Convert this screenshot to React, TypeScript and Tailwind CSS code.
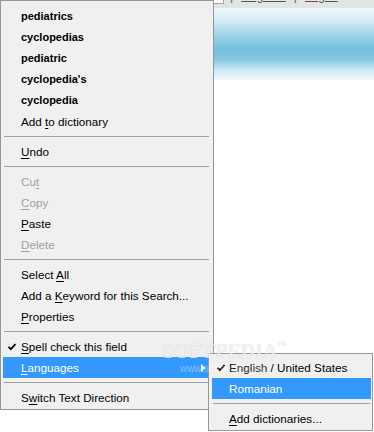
import React from 'react';

type Item =
  | { kind: 'sep' }
  | {
      kind: 'item';
      label: React.ReactNode;
      bold?: boolean;
      disabled?: boolean;
      checked?: boolean;
      active?: boolean;
      submenu?: boolean;
    };

const U: React.FC<{ children: React.ReactNode }> = ({ children }) => <span className="underline underline-offset-2">{children}</span>;

const Check: React.FC<{ white?: boolean }> = ({ white }) => (
  <svg width="8" height="8" viewBox="0 0 8 8" className="absolute left-[5px] top-[7px]">
    <path d="M0.5 3.8 L2.8 6.2 L7.5 1" stroke={white ? '#fff' : '#000'} strokeWidth="1.8" fill="none" />
  </svg>
);

const mainItems: Item[] = [
  { kind: 'item', label: 'pediatrics', bold: true },
  { kind: 'item', label: 'cyclopedias', bold: true },
  { kind: 'item', label: 'pediatric', bold: true },
  { kind: 'item', label: "cyclopedia's", bold: true },
  { kind: 'item', label: 'cyclopedia', bold: true },
  { kind: 'item', label: <>Add <U>t</U>o dictionary</> },
  { kind: 'sep' },
  { kind: 'item', label: <><U>U</U>ndo</> },
  { kind: 'sep' },
  { kind: 'item', label: <>Cu<U>t</U></>, disabled: true },
  { kind: 'item', label: <><U>C</U>opy</>, disabled: true },
  { kind: 'item', label: <><U>P</U>aste</> },
  { kind: 'item', label: <><U>D</U>elete</>, disabled: true },
  { kind: 'sep' },
  { kind: 'item', label: <>Select <U>A</U>ll</> },
  { kind: 'item', label: <>Add a <U>K</U>eyword for this Search...</> },
  { kind: 'item', label: <><U>P</U>roperties</> },
  { kind: 'sep' },
  { kind: 'item', label: <><U>S</U>pell check this field</>, checked: true },
  { kind: 'item', label: <><U>L</U>anguages</>, active: true, submenu: true },
  { kind: 'sep' },
  { kind: 'item', label: <>S<U>w</U>itch Text Direction</> },
];

const subItems: Item[] = [
  { kind: 'item', label: 'English / United States', checked: true },
  { kind: 'item', label: 'Romanian', active: true },
  { kind: 'sep' },
  { kind: 'item', label: <><U>A</U>dd dictionaries...</> },
];

const MenuRows: React.FC<{ items: Item[]; indent: string }> = ({ items, indent }) => (
  <>
    {items.map((it, i) =>
      it.kind === 'sep' ? (
        <div key={i} className="h-[9px] pt-[4px] px-[1px]">
          <div className="h-px bg-[#a0a0a0]" />
        </div>
      ) : (
        <div
          key={i}
          className={`relative h-[21px] leading-[21px] whitespace-nowrap ${indent} ${it.active ? 'bg-[#3399ff] text-white' : it.disabled ? 'text-[#a0a0a0]' : 'text-black'} ${it.bold ? 'font-bold text-[11px]' : 'text-[11.7px]'}`}
        >
          {it.checked && <Check white={it.active} />}
          {it.label}
          {it.submenu && (
            <svg width="5" height="8" viewBox="0 0 5 8" className="absolute right-[4px] top-[7px]">
              <path d="M0 0 L4.5 4 L0 8 Z" fill="#fff" />
            </svg>
          )}
        </div>
      )
    )}
  </>
);

export default function App() {
  return (
    <div className="relative w-[374px] h-[432px] overflow-hidden bg-white" style={{ fontFamily: '"Liberation Sans", Arial, sans-serif' }}>
      {/* page behind the menu */}
      <div className="h-[8px] bg-[#e4e4e4] overflow-hidden flex text-[12px] text-[#555]">
        <div className="w-[224px] h-[4px] bg-white border-r border-b border-[#a0a0a0] shrink-0" />
        <div className="flex gap-[8px] -mt-[11px] pl-[6px] leading-[14px]">
          <span>|</span>
          <span className="underline">Register</span>
          <span>|</span>
          <span className="underline">Log in</span>
        </div>
      </div>
      <div className="h-[72px] bg-[linear-gradient(to_bottom,#eff7fc_0%,#d3eaf5_18%,#97d0e6_40%,#72bfdc_58%,#86c9e2_72%,#d4ecf6_88%,#f3f9fd_100%)]" />

      {/* context menu */}
      <div className="absolute left-0 top-0 w-[214px] h-[410px] bg-[#f0f0f0] border border-[#979797] pt-[5px] pl-[2px] pr-[3px]">
        <MenuRows items={mainItems} indent="pl-[18px]" />
      </div>

      {/* submenu */}
      <div className="absolute left-[208px] top-[353px] w-[165px] h-[78px] bg-[#f0f0f0] border border-[#979797] pt-[3px] pl-[3px] pr-[1px]">
        <MenuRows items={subItems} indent="pl-[17px]" />
      </div>

      {/* watermark */}
      <div className="absolute left-[163px] top-[341px] pointer-events-none text-white/70 font-bold text-[20px] leading-none [text-shadow:0_0_1px_rgba(120,120,120,0.35)]" style={{ fontFamily: '"Liberation Serif", serif' }}>
        SOFTPEDIA<span className="text-[9px] align-top">™</span>
      </div>
      <div className="absolute left-[180px] top-[364px] pointer-events-none text-white/40 text-[10px] leading-none">
        www.softpedia.com
      </div>
    </div>
  );
}
